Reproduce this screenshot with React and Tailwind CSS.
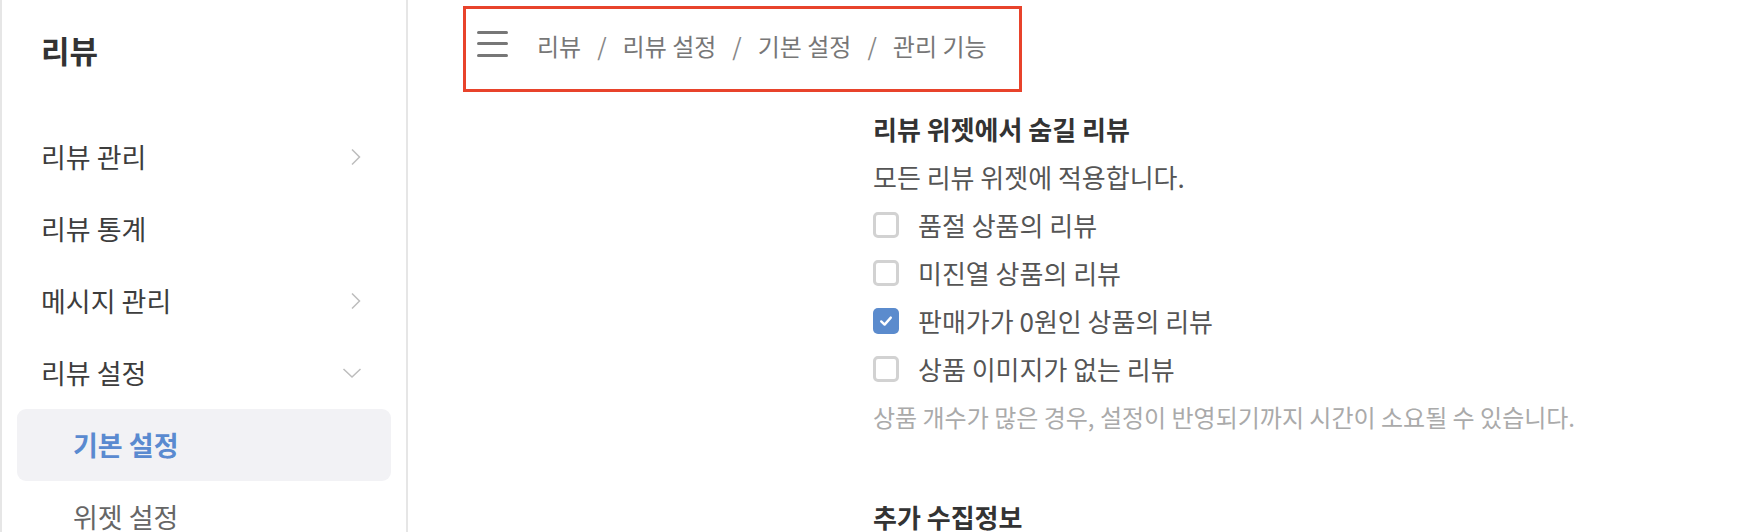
import React from "react";

const F = { fontFamily: '"Noto Sans CJK KR", "Noto Sans", sans-serif' };

function ChevronRight() {
  return (
    <svg width="12" height="18" viewBox="0 0 12 18" fill="none">
      <path d="M2 1.5 L9.5 9 L2 16.5" stroke="#bdbdbd" strokeWidth="1.5" />
    </svg>
  );
}

function ChevronDown() {
  return (
    <svg width="20" height="12" viewBox="0 0 20 12" fill="none">
      <path d="M1.5 2 L10 10 L18.5 2" stroke="#bdbdbd" strokeWidth="1.5" />
    </svg>
  );
}

function Checkbox({ checked }) {
  if (checked) {
    return (
      <span className="flex h-[26px] w-[26px] shrink-0 items-center justify-center rounded-[5px] bg-[#5b8bcd]">
        <svg width="16" height="16" viewBox="0 0 16 16" fill="none">
          <path d="M3.2 8.4 L6.6 11.6 L12.8 4.6" stroke="#ffffff" strokeWidth="2.4" strokeLinecap="round" strokeLinejoin="round" />
        </svg>
      </span>
    );
  }
  return <span className="h-[26px] w-[26px] shrink-0 rounded-[5px] border-[3px] border-[#d2d2d2] bg-white" />;
}

function MenuItem({ label, icon }) {
  return (
    <div className="flex h-[72px] shrink-0 items-center justify-between pl-[39px] pr-[44px] text-[27px] text-[#3d3d3d]">
      <span>{label}</span>
      {icon}
    </div>
  );
}

function Sep() {
  return <span className="mx-[16px] text-[#888]">/</span>;
}

export default function App() {
  const options = [
    { label: "품절 상품의 리뷰", checked: false },
    { label: "미진열 상품의 리뷰", checked: false },
    { label: "판매가가 0원인 상품의 리뷰", checked: true },
    { label: "상품 이미지가 없는 리뷰", checked: false },
  ];
  return (
    <div style={F} className="flex h-[532px] w-[1750px] overflow-hidden bg-white">
      <aside className="h-full w-[408px] shrink-0 border-l-2 border-r-2 border-[#e6e6e6] bg-white">
        <div className="pt-[30px] pl-[39px] text-[31px] font-bold leading-[40px] text-[#333]">리뷰</div>
        <div className="mt-[51px] flex flex-col">
          <MenuItem label="리뷰 관리" icon={<ChevronRight />} />
          <MenuItem label="리뷰 통계" />
          <MenuItem label="메시지 관리" icon={<ChevronRight />} />
          <MenuItem label="리뷰 설정" icon={<ChevronDown />} />
          <div className="mx-[15px] flex h-[72px] shrink-0 items-center rounded-[9px] bg-[#f2f2f5] pl-[56px] text-[27px] font-bold text-[#5a8ad0]">
            기본 설정
          </div>
          <div className="flex h-[72px] shrink-0 items-center pl-[71px] text-[27px] text-[#666]">위젯 설정</div>
        </div>
      </aside>
      <main className="min-w-0 flex-1 bg-white">
        <div className="ml-[55px] mt-[6px] flex h-[86px] w-[559px] items-center border-[3px] border-[#e8432b] pb-[7px] pl-[11px]">
          <div className="mb-[4px] flex w-[31px] flex-col gap-[8.5px]">
            <span className="h-[3px] w-full rounded-full bg-[#777]" />
            <span className="h-[3px] w-full rounded-full bg-[#777]" />
            <span className="h-[3px] w-full rounded-full bg-[#777]" />
          </div>
          <div className="ml-[29px] flex items-center whitespace-nowrap text-[24px] text-[#777]">
            <span>리뷰</span>
            <Sep />
            <span>리뷰 설정</span>
            <Sep />
            <span>기본 설정</span>
            <Sep />
            <span>관리 기능</span>
          </div>
        </div>
        <section className="ml-[465px] mt-[13px]">
          <div className="h-[48px] text-[26px] font-bold leading-[48px] text-[#333]">리뷰 위젯에서 숨길 리뷰</div>
          <div className="h-[48px] text-[26px] leading-[48px] text-[#555]">모든 리뷰 위젯에 적용합니다.</div>
          {options.map((o) => (
            <label key={o.label} className="flex h-[48px] items-center gap-[19px] text-[26px] text-[#555]">
              <Checkbox checked={o.checked} />
              <span className="leading-[48px]">{o.label}</span>
            </label>
          ))}
          <div className="h-[48px] whitespace-nowrap text-[24px] leading-[48px] text-[#aaa]">
            상품 개수가 많은 경우, 설정이 반영되기까지 시간이 소요될 수 있습니다.
          </div>
          <div className="mt-[52px] h-[48px] text-[26px] font-bold leading-[48px] text-[#333]">추가 수집정보</div>
        </section>
      </main>
    </div>
  );
}
